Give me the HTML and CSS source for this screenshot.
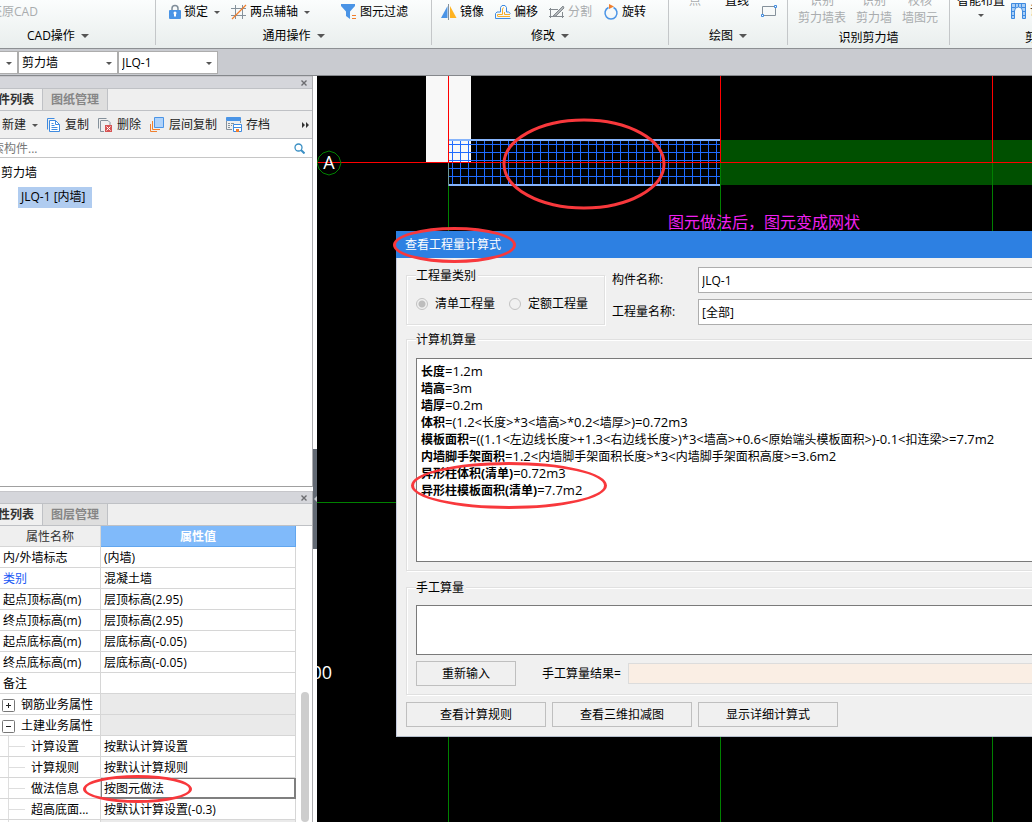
FILE: index.html
```html
<!DOCTYPE html>
<html lang="zh-CN">
<head>
<meta charset="utf-8">
<title>查看工程量计算式</title>
<link rel="stylesheet" href="styles.css">
</head>
<body>
<div class="app">
  <header class="ribbon">
    <section class="group group-cad">
      <div class="tools"><button class="tool off">还原CAD</button></div>
      <button class="group-name">CAD操作<i class="caret big"></i></button>
    </section>
    <section class="group group-common">
      <div class="tools">
        <button class="tool"><svg width="12" height="16" viewBox="0 0 12 16"><path d="M3 7V4.500a3 3 0 0 1 6 0V7" fill="none" stroke="#7f8d99" stroke-width="1.500"/><rect x="0" y="6" width="12" height="9" rx="1" fill="#4a94e6"/><path d="M6 8.500v4" stroke="#fff" stroke-width="2"/><circle cx="6" cy="9" r="1.500" fill="#fff"/></svg>锁定<i class="caret"></i></button>
        <button class="tool"><svg width="16" height="16" viewBox="0 0 16 16"><path d="M4.500 1v14M11.500 1v14M0 4.500h15M0 11.500h15" stroke="#85919b" fill="none"/><path d="M1 15L15 1" stroke="#f07f2e" stroke-width="1.300"/></svg>两点辅轴<i class="caret"></i></button>
        <button class="tool filter"><svg width="16" height="16" viewBox="0 0 16 16"><path d="M0 0h14v2L9 7.500V15L5 12V7.500L0 2z" fill="#4a94e6"/><path d="M11 11.500h4M11 14.500h4" stroke="#f07f2e"/></svg>图元过滤</button>
      </div>
      <button class="group-name">通用操作<i class="caret big"></i></button>
    </section>
    <section class="group group-edit">
      <div class="tools">
        <button class="tool"><svg width="16" height="16" viewBox="0 0 16 16"><path d="M6.500 2v12H0z" fill="#4a94e6"/><path d="M9 2v12h6.500z" fill="#ffb320"/><path d="M7.500 0v16" stroke="#85919b"/></svg>镜像</button>
        <button class="tool"><svg width="16" height="16" viewBox="0 0 16 16"><path d="M5.500 8V3.500L7 1.500h3l1.500 2V8h2l2 1.500M5.500 8H2L.5 9.500v5h15" fill="none" stroke="#3f8be0"/><path d="M2.500 12V10.500H7.500V5l1-1.500M9.500 8v2.500H15M2.500 12.500H15" fill="none" stroke="#f5ae2a"/></svg>偏移</button>
        <button class="tool off"><svg width="16" height="16" viewBox="0 0 16 16"><path d="M1.500 4v10M1.500 5.500H9M1.500 12.500H15M13.500 8v6M0 5.500h3M0 12.500h3" fill="none" stroke="#858b90"/><path d="M4 12L14 2l1 2-8 8z" fill="#b2b7ba" stroke="#858b90"/></svg>分割</button>
        <button class="tool"><svg width="16" height="16" viewBox="-1 0 16 16"><path d="M9.500 3.500a6 6 0 1 1-5 0" fill="none" stroke="#4a94e6" stroke-width="1.500"/><path d="M5 0l5 2.500L5 5z" fill="#f07f2e"/></svg>旋转</button>
      </div>
      <button class="group-name">修改<i class="caret big"></i></button>
    </section>
    <section class="group group-draw">
      <div class="tools tall">
        <button class="tool stack off">点</button>
        <button class="tool stack">直线</button>
        <button class="tool" aria-label="矩形"><svg width="16" height="12" viewBox="0 0 16 12"><path d="M1.500 1.500h13v9h-13z" fill="none" stroke="#85919b"/><path d="M13.500.500h2v2h-2zM.5 9.500h2v2h-2z" fill="#fff" stroke="#3f8be0"/></svg></button>
      </div>
      <button class="group-name">绘图<i class="caret big"></i></button>
    </section>
    <section class="group group-detect">
      <div class="tools tall">
        <button class="tool stack off">识别<br>剪力墙表</button>
        <button class="tool stack off">识别<br>剪力墙</button>
        <button class="tool stack off">校核<br>墙图元</button>
      </div>
      <span class="group-name">识别剪力墙</span>
    </section>
    <section class="group group-smart">
      <div class="tools tall">
        <button class="tool stack">智能布置<i class="caret"></i></button>
        <button class="tool arch"><svg width="16" height="16" viewBox="0 0 16 16"><path d="M.5 15.500V.500h14v15h-3V8a4 4 0 0 0-8 0v7.500z" fill="#a9cff7" stroke="#3f8be0"/><path d="M.5 4.500h4M.5 8.500h3M.5 12.500h3M11.500 8.500h3M11.500 12.500h3M10.500 4.500h4M4.500.500v4M7.500.500V4M10.500.500v4" stroke="#3f8be0"/></svg>识别</button>
      </div>
      <span class="group-name">剪力墙二次编辑</span>
    </section>
  </header>

  <nav class="selectors">
    <select class="sel-floor" aria-label="楼层"><option></option></select>
    <select class="sel-item" aria-label="构件类型"><option>剪力墙</option></select>
    <select class="sel-item" aria-label="构件"><option>JLQ-1</option></select>
  </nav>

  <main class="work">
    <aside class="side">
      <section class="panel">
        <div class="panel-bar"><button aria-label="关闭" class="close"><svg width="6" height="6" viewBox="0 0 6 6"><path d="M.5.500l5 5M5.500.500l-5 5" stroke="#6c6c70" stroke-width="1.400"/></svg></button></div>
        <div class="tabs"><button class="tab on">构件列表</button><button class="tab">图纸管理</button></div>
        <div class="actions">
          <button class="action">新建<i class="caret"></i></button>
          <button class="action"><svg width="14" height="16" viewBox="0 0 14 16"><path d="M.5 12.500V1.500h7" fill="none" stroke="#3f8be0"/><path d="M2.500 3.500h6l4 4v7h-10z" fill="#fff" stroke="#3f8be0"/><path d="M8.500 3.500v4h4M4.500 6.500h2M4.500 8.500h3M4.500 10.500h6M4.500 12.500h6" fill="none" stroke="#3f8be0"/></svg>复制</button>
          <button class="action"><svg width="15" height="16" viewBox="0 0 15 16"><path d="M.5 11.500V1.500h8M3 3.500h7l2 2V8M2.500 3.500v11H6" fill="none" stroke="#85919b"/><rect x="7" y="8" width="7" height="7" fill="#d65454"/><path d="M8.500 9.500l4 4M12.500 9.500l-4 4" stroke="#fff"/></svg>删除</button>
          <button class="action"><svg width="15" height="16" viewBox="0 0 15 16"><path d="M4.500.500h9v10h-9z" fill="#b0d3fa" stroke="#4a94e6"/><path d="M2.500 4v8.500H10M.5 7v7.500H7" fill="none" stroke="#f07f2e"/></svg>层间复制</button>
          <button class="action"><svg width="16" height="16" viewBox="0 0 16 16"><path d="M.5.500h14v3H.5z" fill="#4a94e6" stroke="#4a94e6"/><path d="M.5 4v8.500H6M2 6.500h2M5 6.500h3M2 8.500h2M5 8.500h1M2 10.500h2M14.500 4v2" fill="none" stroke="#85919b"/><path d="M7.500 7.500h8v7h-8z" fill="#fff" stroke="#3f8be0"/><path d="M7 10.500h9" stroke="#3f8be0"/><path d="M10 12h3v3h-3z" fill="#f07f2e"/></svg>存档</button>
          <button class="more" aria-label="更多"><svg width="8" height="6" viewBox="0 0 8 6"><path d="M0 0l3 3-3 3zM4 0l3 3-3 3z" fill="#333"/></svg></button>
        </div>
        <div class="search">
          <input type="text" aria-label="搜索构件" placeholder="搜索构件...">
          <svg width="11" height="11" viewBox="0 0 11 11"><circle cx="4.500" cy="4.500" r="3.500" fill="none" stroke="#3a8fc4" stroke-width="1.300"/><path d="M7 7l3.500 3.500" stroke="#3a8fc4" stroke-width="2"/></svg>
        </div>
        <ul class="tree"><li>剪力墙<ul><li><span class="chosen">JLQ-1 [内墙]</span></li></ul></li></ul>
      </section>
      <section class="panel">
        <div class="panel-bar"><button aria-label="关闭" class="close"><svg width="6" height="6" viewBox="0 0 6 6"><path d="M.5.500l5 5M5.500.500l-5 5" stroke="#6c6c70" stroke-width="1.400"/></svg></button></div>
        <div class="tabs"><button class="tab on">属性列表</button><button class="tab">图层管理</button></div>
        <div class="props">
          <table>
            <thead><tr><th>属性名称</th><th class="value">属性值</th></tr></thead>
            <tbody>
              <tr><td>内/外墙标志</td><td>(内墙)</td></tr>
              <tr><td class="blue">类别</td><td>混凝土墙</td></tr>
              <tr><td>起点顶标高(m)</td><td>层顶标高(2.95)</td></tr>
              <tr><td>终点顶标高(m)</td><td>层顶标高(2.95)</td></tr>
              <tr><td>起点底标高(m)</td><td>层底标高(-0.05)</td></tr>
              <tr><td>终点底标高(m)</td><td>层底标高(-0.05)</td></tr>
              <tr><td>备注</td><td></td></tr>
              <tr><td><button class="fold" aria-label="展开"><svg width="13" height="13" viewBox="0 0 13 13"><rect x=".5" y=".5" width="12" height="12" rx="1" fill="#fff" stroke="#777"/><path d="M4 6.500h5M6.500 4v5" stroke="#222"/></svg></button>钢筋业务属性</td><td class="grey"></td></tr>
              <tr><td><button class="fold" aria-label="收起"><svg width="13" height="13" viewBox="0 0 13 13"><rect x=".5" y=".5" width="12" height="12" rx="1" fill="#fff" stroke="#777"/><path d="M4 6.500h5" stroke="#222"/></svg></button>土建业务属性</td><td class="grey"></td></tr>
              <tr><td class="child">计算设置</td><td>按默认计算设置</td></tr>
              <tr><td class="child">计算规则</td><td>按默认计算规则</td></tr>
              <tr><td class="child">做法信息</td><td class="editing">按图元做法<span class="mark mark-prop"></span></td></tr>
              <tr><td class="child">超高底面...</td><td>按默认计算设置(-0.3)</td></tr>
              <tr><td class="child"></td><td class="grey"></td></tr>
            </tbody>
          </table>
          <div class="scroll"><span></span></div>
        </div>
      </section>
    </aside>
    <div class="splitter"><button aria-label="折叠"><svg width="4" height="6" viewBox="0 0 4 6"><path d="M4 0v6L1 3z" fill="#c4c8cc"/></svg></button></div>

    <div class="canvas">
      <svg class="drawing" width="100%" height="100%">
        <defs>
          <pattern id="mesh" x="135" y="68" width="8" height="8" patternUnits="userSpaceOnUse"><path d="M0 0h8v1H1v7H0z" fill="#1e6bff" shape-rendering="crispEdges"/></pattern>
        </defs>
        <rect x="109" y="0" width="45" height="87" fill="#f8f8f8"/>
        <rect x="403" y="64" width="3000" height="45" fill="#005000"/>
        <path d="M131.500 110v1000M403.500 86v1000M675.500 86v1000M0 426.500h79" stroke="#008000"/>
        <rect x="131" y="64" width="272" height="46" fill="url(#mesh)"/>
        <path d="M131 64h272M131 109h272" stroke="#86b4fb" stroke-width="2"/>
        <path d="M131.500 86v24" stroke="#6b9a9a"/>
        <path d="M131.500 0v86M403.500 0v86M675.500 0v86M0 86.500h3000" stroke="#f00"/>
        <path d="M12 75l6 2 4 4 2 6-2 6-4 4-6 2-6-2-4-4-2-6 2-6 4-4z" fill="none" stroke="#008000"/>
        <text class="axis" x="12" y="93" text-anchor="middle">A</text>
        <text class="axis" x="15" y="603" text-anchor="end">00</text>
        <text class="note" x="351" y="152">图元做法后，图元变成网状</text>
        <ellipse cx="267" cy="88" rx="80" ry="44" fill="none" stroke="#f8383c" stroke-width="3"/>
      </svg>

      <form class="dialog" aria-label="查看工程量计算式">
        <h1>查看工程量计算式<span class="mark mark-title"></span></h1>
        <div class="dialog-body">
          <div class="top">
            <fieldset class="kind">
              <legend>工程量类别</legend>
              <div class="radios">
                <label><input type="radio" name="kind" checked disabled>清单工程量</label>
                <label><input type="radio" name="kind" disabled>定额工程量</label>
              </div>
            </fieldset>
            <div class="fields">
              <label for="part">构件名称:</label><input id="part" type="text" value="JLQ-1">
              <label for="qty">工程量名称:</label><input id="qty" type="text" value="[全部]">
            </div>
          </div>
          <fieldset class="auto">
            <legend>计算机算量</legend>
            <div class="formulas">
              <p><b>长度</b>=1.2m</p>
              <p><b>墙高</b>=3m</p>
              <p><b>墙厚</b>=0.2m</p>
              <p><b>体积</b>=(1.2&lt;<span>长度</span>&gt;*3&lt;<span>墙高</span>&gt;*0.2&lt;<span>墙厚</span>&gt;)=0.72m3</p>
              <p><b>模板面积</b>=((1.1&lt;<span>左边线长度</span>&gt;+1.3&lt;<span>右边线长度</span>&gt;)*3&lt;<span>墙高</span>&gt;+0.6&lt;<span>原始端头模板面积</span>&gt;)-0.1&lt;<span>扣连梁</span>&gt;=7.7m2</p>
              <p><b>内墙脚手架面积</b>=1.2&lt;<span>内墙脚手架面积长度</span>&gt;*3&lt;<span>内墙脚手架面积高度</span>&gt;=3.6m2</p>
              <p><b>异形柱体积(清单)</b>=0.72m3</p>
              <p><b>异形柱模板面积(清单)</b>=7.7m2</p>
              <i class="mark mark-formula"></i>
            </div>
          </fieldset>
          <fieldset class="manual">
            <legend>手工算量</legend>
            <textarea aria-label="手工算量"></textarea>
            <div class="result">
              <button type="button" class="btn">重新输入</button>
              <label for="sum">手工算量结果=</label>
              <input id="sum" type="text" readonly>
            </div>
          </fieldset>
          <div class="footer">
            <button type="button" class="btn">查看计算规则</button>
            <button type="button" class="btn">查看三维扣减图</button>
            <button type="button" class="btn">显示详细计算式</button>
          </div>
        </div>
      </form>
    </div>
  </main>
</div>
</body>
</html>
```

FILE: styles.css
```css
* { box-sizing: border-box; }
body {
  margin: 0;
  font: 12px/16px "Open Sans", "Noto Sans CJK SC", sans-serif;
  color: #000;
}
button, input, select, textarea { font: inherit; color: inherit; }
button { margin: 0; padding: 0; border: 0; background: none; white-space: nowrap; }
svg { display: block; flex: none; }
p { margin: 0; }

.app { display: flex; flex-direction: column; height: 100vh; overflow: hidden; }

.caret {
  display: inline-block;
  border: 3px solid transparent;
  border-top-color: #555;
  border-bottom: 0;
  margin-left: 6px;
}
.caret.big { border-width: 4px 4px 0; }

/* ribbon */
.ribbon {
  display: flex;
  flex: none;
  height: 49px;
  overflow: hidden;
  background: linear-gradient(#fbfdfd, #e9eeed);
  border-bottom: 1px solid #8d9093;
}
.group {
  display: flex;
  flex: none;
  flex-direction: column;
  height: 45px;
  border-right: 1px solid #c4c7c9;
}
.group:last-child { border-right: 0; }
.tools { display: flex; flex: none; height: 24px; align-items: center; padding-left: 9px; }
.tool { display: flex; align-items: center; gap: 3px; height: 16px; }
.tool .caret { margin-left: 3px; }
.off { color: #a9acae; }
.group-name { display: flex; flex: none; align-items: center; justify-content: center; height: 24px; }
.tools.tall { align-items: flex-start; }
.tools .stack { display: block; margin-top: -8px; height: auto; text-align: center; line-height: 17px; }
.stack .caret { display: block; width: 6px; margin: 5px auto 0; }

.group-cad { width: 156px; }
.group-cad .tools { padding: 0; margin-left: -10px; }
.group-cad .group-name { justify-content: flex-start; padding-left: 27px; }
.group-common { width: 276px; }
.group-common .tools { padding-left: 13px; gap: 11px; }
.group-common .filter { margin-left: 20px; }
.group-edit { width: 237px; }
.group-edit .tools { gap: 11px; }
.group-draw { width: 119px; }
.group-draw .tools { padding-left: 20px; gap: 24px; }
.group-draw .tool:last-child { height: 22px; margin-left: -12px; }
.group-detect { width: 162px; }
.group-detect .tools { padding-left: 10px; gap: 10px; }
.group-detect .group-name { height: 27px; }
.group-smart .tools { padding-left: 7px; gap: 6px; }
.group-smart .arch { height: 22px; }
.group-smart .group-name { justify-content: flex-start; height: 27px; padding-left: 75px; }

/* selectors */
.selectors {
  display: flex;
  flex: none;
  height: 27px;
  padding: 2px 0;
  background: #c9cbd0;
  border-bottom: 1px solid #85888c;
}
.selectors select {
  appearance: none;
  width: 100px;
  height: 23px;
  padding: 0 3px;
  border: 1px solid #adadad;
  border-radius: 0;
  background: #fff url("data:image/svg+xml,%3Csvg xmlns='http://www.w3.org/2000/svg' width='6' height='4'%3E%3Cpath d='M0 0h6L3 3z' fill='%23555'/%3E%3C/svg%3E") no-repeat right 5px top 10px;
}
.selectors .sel-floor { width: 18px; border-left: 0; }

/* side panels */
.work { display: flex; flex: 1; min-height: 0; }
.side {
  display: grid;
  flex: none;
  width: 313px;
  grid-template-rows: minmax(0, 411fr) minmax(0, 331fr);
  gap: 4px;
  overflow: hidden;
}
.panel {
  display: flex;
  flex-direction: column;
  min-width: 0;
  overflow: hidden;
  border-right: 1px solid #adadb0;
  border-bottom: 1px solid #a0a0a0;
}
.panel:last-child { border-bottom: 0; }
.panel-bar {
  display: flex;
  flex: none;
  justify-content: flex-end;
  align-items: center;
  height: 12px;
  padding-right: 5px;
  background: #d5d6db;
  border-top: 1px solid #c6c6ca;
}
.tabs {
  display: flex;
  flex: none;
  height: 23px;
  background: #efefef;
  border-top: 1px solid #bfc1c5;
  border-bottom: 1px solid #bfc1c5;
}
.tab { padding: 1px 8px 0; background: #dedede; border-right: 1px solid #bfc1c5; color: #868686; font-weight: 700; }
.tab.on { margin-left: -22px; background: #efefef; color: #333; }
.actions { display: flex; flex: none; align-items: center; height: 28px; padding: 1px 0 0 2px; gap: 9px; background: #efefef; color: #222; border-bottom: 1px solid #bfc1c5; }
.action { display: flex; align-items: center; gap: 4px; }
.action .caret { margin-left: 2px; }
.more { margin: 0 2px 0 auto; }
.search { display: flex; flex: none; align-items: center; height: 19px; padding-right: 7px; border-bottom: 1px solid #c6c6c6; }
.search input { flex: 1; height: 17px; margin-left: -20px; padding: 0; border: 0; outline: 0; }
.search input::placeholder { color: #777; opacity: 1; }
.tree, .tree ul { margin: 0; padding: 0; list-style: none; }
.tree { padding: 7px 1px; }
.tree ul { padding: 6px 0 0 17px; }
.chosen { display: inline-block; padding: 2px 6px 3px 3px; background: #b0ccf0; }

.props { display: flex; flex: 1; align-items: flex-start; min-height: 0; overflow: hidden; }
table { flex: none; width: 296px; table-layout: fixed; border-collapse: separate; border-spacing: 0; }
th, td { position: relative; height: 21px; padding: 2px 3px 0; text-align: left; white-space: nowrap; border-right: 1px solid #d6d6d6; border-bottom: 1px solid #d6d6d6; }
th { width: 101px; text-align: center; font-weight: 400; color: #333; background: #efefef; }
th.value { width: 195px; background: #80bafa; border-color: #62a6ee; color: #fff; font-weight: 700; }
.blue { color: #1857f5; }
.grey { background: #eaeaea; }
.fold { display: inline-block; margin: 0 6px 0 -1px; vertical-align: middle; }
.child { padding-left: 31px; background: linear-gradient(#dedede, #dedede) 8px 0 / 1px 100% no-repeat, linear-gradient(#dedede, #dedede) 8px 10px / 17px 1px no-repeat; }
.editing { box-shadow: inset 0 0 0 1px #7f7f7f; border-color: #7f7f7f; }
.scroll { align-self: stretch; padding: 166px 0 0 5px; }
.scroll span { display: block; width: 8px; height: 100%; border-radius: 4px; background: #cdcdcd; }

.splitter { display: grid; flex: none; width: 4px; grid-template-rows: 373fr 100px 273fr; background: #fff; }
.splitter button { display: flex; grid-row: 2; align-items: center; background: #626973; }

/* drawing canvas */
.canvas { position: relative; flex: 1; min-width: 0; overflow: hidden; background: #000; }
.axis { font-size: 18px; fill: #fff; }
.note { font-size: 16px; fill: #f020f0; }

.mark { position: absolute; border: 3px solid #f8383c; border-radius: 50%; pointer-events: none; }
.mark-title { left: -3px; top: -4px; width: 123px; height: 36px; }
.mark-formula { left: -6px; top: 103px; width: 196px; height: 47px; }
.mark-prop { left: -18px; top: -3px; width: 109px; height: 28px; z-index: 1; }

/* dialog */
.dialog { position: absolute; left: 79px; right: -40px; top: 155px; background: #f0f0f0; border-left: 1px solid #c3c9dc; border-bottom: 1px solid #b5bfcc; }
.dialog h1 { position: relative; margin: 0 0 0 -1px; padding: 6px 9px 5px; font-size: 12px; font-weight: 400; color: #fff; background: #2d80e2; }
.dialog-body { display: flex; flex-direction: column; padding: 9px 9px 9px; }
fieldset { min-width: 0; margin: 0; padding: 0 9px; border: 1px solid #e0e0e0; box-shadow: inset 1px 1px #fff, 1px 1px #fff; }
legend { height: 16px; padding: 0 2px 0 0; line-height: 18px; background: #f0f0f0; }
.top { display: flex; gap: 7px; }
.kind { flex: none; width: 199px; height: 58px; }
.radios { display: flex; gap: 14px; padding-top: 13px; line-height: 18px; }
.radios label { display: flex; align-items: center; gap: 7px; height: 16px; white-space: nowrap; }
.radios input {
  appearance: none;
  width: 12px;
  height: 12px;
  margin: 0;
  border: 1px solid #c2c2c2;
  border-radius: 50%;
}
.radios input:checked { background: radial-gradient(circle, #bdbdbd 3px, transparent 4px); }
.fields { display: grid; flex: 1; grid-template-columns: 86px 1fr; gap: 6px 0; align-items: center; line-height: 18px; }
.fields input { width: 100%; height: 26px; padding: 0 3px; border: 1px solid #adadad; background: #fff; }
.auto { margin-top: 6px; padding: 11px 9px 8px; }
.formulas { position: relative; height: 204px; padding: 4px; background: #fff; border: 1px solid #7a7a7a; font-size: 13px; line-height: 17px; white-space: nowrap; }
.formulas b, .formulas span { font-size: 12px; }
.manual { margin-top: 8px; padding: 10px 9px 8px; }
.manual textarea { display: block; width: 100%; height: 50px; resize: none; border: 1px solid #7a7a7a; background: #fff; }
.result { display: flex; align-items: center; margin-top: 6px; }
.result label { margin: 0 7px 0 26px; }
.result input { flex: 1; height: 21px; border: 1px solid #dcdcdc; background: #faeee4; }
.btn { height: 25px; border: 1px solid #bfbfbf; background: #f0f0f0; }
.result .btn { width: 100px; }
.footer { display: flex; gap: 6px; margin-top: 7px; }
.footer .btn { width: 140px; }
```
